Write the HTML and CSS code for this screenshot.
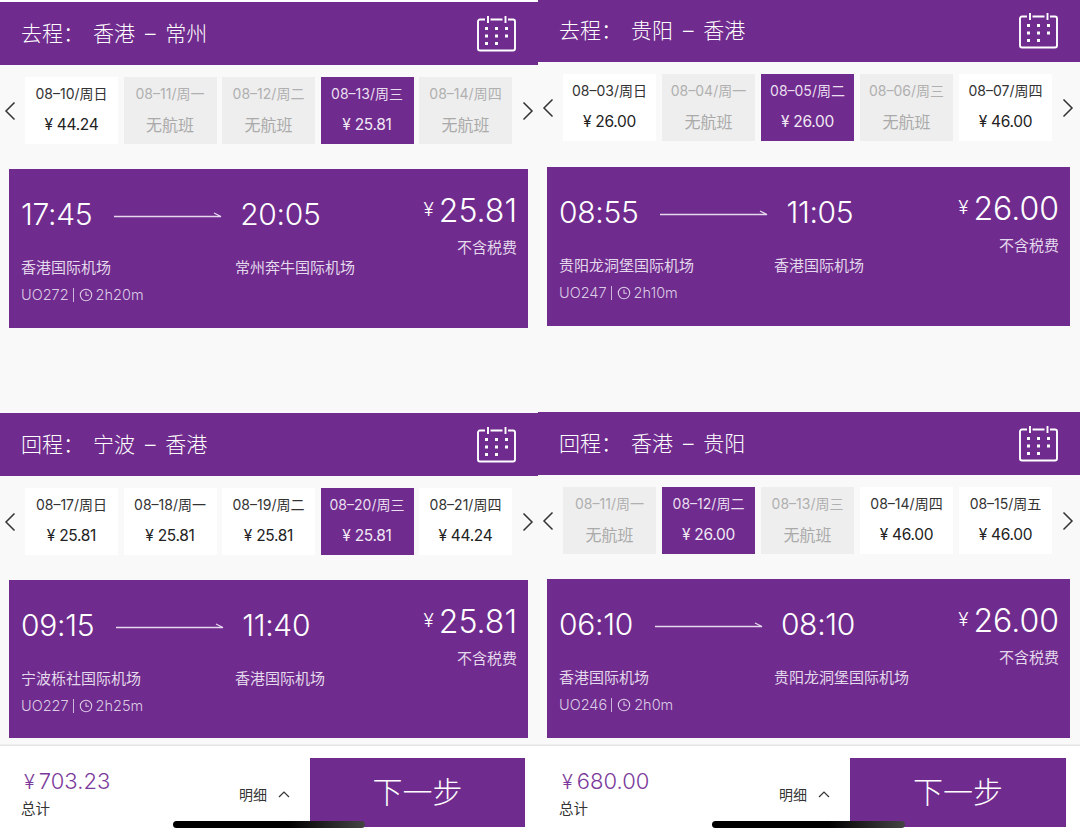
FILE: index.html
```html
<!DOCTYPE html>
<html>
  <head>
    <title>航班选择</title>
    <meta name="viewport" content="width=device-width, initial-scale=1">
    <link rel="stylesheet" href="styles.css">
  </head>
  <body>
    <svg class="defs" width="0" height="0">
      <symbol id="cal" viewBox="0 0 40 37">
        <path d="M8 4.500H3A2 2 0 0 0 1 6.500v27A2 2 0 0 0 3 35.500h33a2 2 0 0 0 2-2v-27a2 2 0 0 0-2-2H31M13.500 4.500h12M11 1v7M28.500 1v7" fill="none" stroke="#fff" stroke-width="1.900"/>
        <g fill="#fff">
          <rect x="8" y="12" width="3" height="3"/><rect x="18" y="12" width="3" height="3"/><rect x="28" y="12" width="3" height="3"/>
          <rect x="8" y="19.500" width="3" height="3"/><rect x="18" y="19.500" width="3" height="3"/><rect x="28" y="19.500" width="3" height="3"/>
          <rect x="8" y="27" width="3" height="3"/><rect x="18" y="27" width="3" height="3"/>
        </g>
      </symbol>
      <symbol id="prev" viewBox="0 0 12 20"><path d="M10.500 1.500 2 10l8.500 8.500" fill="none" stroke="#333" stroke-width="1.500"/></symbol>
      <symbol id="next" viewBox="0 0 12 20"><path d="M1.500 1.500 10 10l-8.500 8.500" fill="none" stroke="#333" stroke-width="1.500"/></symbol>
      <symbol id="arrow" viewBox="0 0 108 8"><path d="M0 5.500H107L100 2" fill="none" stroke="#e6d8ee" stroke-width="1.300"/></symbol>
      <symbol id="clock" viewBox="0 0 14 14"><circle cx="7" cy="7" r="5.700" fill="none" stroke="#dccbe6" stroke-width="1.100"/><path d="M7 3.600V7.300H10" fill="none" stroke="#dccbe6" stroke-width="1.100"/></symbol>
    </svg>

    <div class="page">
      <div class="col col-left">
        <section class="panel panel-top">
          <header class="head"><span class="head-label">去程：</span><span class="head-route">香港 – 常州</span><svg class="cal"><use href="#cal"/></svg></header>
          <div class="dates">
            <svg class="chev"><use href="#prev"/></svg>
            <div class="day"><p>08–10/周日</p><b>¥ 44.24</b></div>
            <div class="day off"><p>08–11/周一</p><b>无航班</b></div>
            <div class="day off"><p>08–12/周二</p><b>无航班</b></div>
            <div class="day on"><p>08–13/周三</p><b>¥ 25.81</b></div>
            <div class="day off"><p>08–14/周四</p><b>无航班</b></div>
            <svg class="chev"><use href="#next"/></svg>
          </div>
          <div class="flight">
            <div class="info">
              <div class="times"><span class="time">17:45</span><svg class="arrow"><use href="#arrow"/></svg><span class="time">20:05</span></div>
              <div class="ports"><span>香港国际机场</span><span>常州奔牛国际机场</span></div>
              <div class="meta">UO272<i class="bar"></i><svg class="clock"><use href="#clock"/></svg>2h20m</div>
            </div>
            <div class="price"><div class="amount"><small>¥</small>25.81</div><div class="tax">不含税费</div></div>
          </div>
        </section>
        <section class="panel panel-bottom">
          <header class="head"><span class="head-label">回程：</span><span class="head-route">宁波 – 香港</span><svg class="cal"><use href="#cal"/></svg></header>
          <div class="dates">
            <svg class="chev"><use href="#prev"/></svg>
            <div class="day"><p>08–17/周日</p><b>¥ 25.81</b></div>
            <div class="day"><p>08–18/周一</p><b>¥ 25.81</b></div>
            <div class="day"><p>08–19/周二</p><b>¥ 25.81</b></div>
            <div class="day on"><p>08–20/周三</p><b>¥ 25.81</b></div>
            <div class="day"><p>08–21/周四</p><b>¥ 44.24</b></div>
            <svg class="chev"><use href="#next"/></svg>
          </div>
          <div class="flight">
            <div class="info">
              <div class="times"><span class="time">09:15</span><svg class="arrow"><use href="#arrow"/></svg><span class="time">11:40</span></div>
              <div class="ports"><span>宁波栎社国际机场</span><span>香港国际机场</span></div>
              <div class="meta">UO227<i class="bar"></i><svg class="clock"><use href="#clock"/></svg>2h25m</div>
            </div>
            <div class="price"><div class="amount"><small>¥</small>25.81</div><div class="tax">不含税费</div></div>
          </div>
        </section>
        <footer class="foot">
          <div class="total"><div class="total-num"><small>¥</small>703.23</div><div class="total-label">总计</div></div>
          <div class="detail">明细<svg class="up" viewBox="0 0 12 8"><path d="M1 7l5-5 5 5" fill="none" stroke="#333" stroke-width="1.200"/></svg></div>
          <div class="next-btn">下一步</div>
          <div class="home-bar"></div>
        </footer>
      </div>

      <div class="col col-right">
        <section class="panel panel-top">
          <header class="head"><span class="head-label">去程：</span><span class="head-route">贵阳 – 香港</span><svg class="cal"><use href="#cal"/></svg></header>
          <div class="dates">
            <svg class="chev"><use href="#prev"/></svg>
            <div class="day"><p>08–03/周日</p><b>¥ 26.00</b></div>
            <div class="day off"><p>08–04/周一</p><b>无航班</b></div>
            <div class="day on"><p>08–05/周二</p><b>¥ 26.00</b></div>
            <div class="day off"><p>08–06/周三</p><b>无航班</b></div>
            <div class="day"><p>08–07/周四</p><b>¥ 46.00</b></div>
            <svg class="chev"><use href="#next"/></svg>
          </div>
          <div class="flight">
            <div class="info">
              <div class="times"><span class="time">08:55</span><svg class="arrow"><use href="#arrow"/></svg><span class="time">11:05</span></div>
              <div class="ports"><span>贵阳龙洞堡国际机场</span><span>香港国际机场</span></div>
              <div class="meta">UO247<i class="bar"></i><svg class="clock"><use href="#clock"/></svg>2h10m</div>
            </div>
            <div class="price"><div class="amount"><small>¥</small>26.00</div><div class="tax">不含税费</div></div>
          </div>
        </section>
        <section class="panel panel-bottom">
          <header class="head"><span class="head-label">回程：</span><span class="head-route">香港 – 贵阳</span><svg class="cal"><use href="#cal"/></svg></header>
          <div class="dates">
            <svg class="chev"><use href="#prev"/></svg>
            <div class="day off"><p>08–11/周一</p><b>无航班</b></div>
            <div class="day on"><p>08–12/周二</p><b>¥ 26.00</b></div>
            <div class="day off"><p>08–13/周三</p><b>无航班</b></div>
            <div class="day"><p>08–14/周四</p><b>¥ 46.00</b></div>
            <div class="day"><p>08–15/周五</p><b>¥ 46.00</b></div>
            <svg class="chev"><use href="#next"/></svg>
          </div>
          <div class="flight">
            <div class="info">
              <div class="times"><span class="time">06:10</span><svg class="arrow"><use href="#arrow"/></svg><span class="time">08:10</span></div>
              <div class="ports"><span>香港国际机场</span><span>贵阳龙洞堡国际机场</span></div>
              <div class="meta">UO246<i class="bar"></i><svg class="clock"><use href="#clock"/></svg>2h0m</div>
            </div>
            <div class="price"><div class="amount"><small>¥</small>26.00</div><div class="tax">不含税费</div></div>
          </div>
        </section>
        <footer class="foot">
          <div class="total"><div class="total-num"><small>¥</small>680.00</div><div class="total-label">总计</div></div>
          <div class="detail">明细<svg class="up" viewBox="0 0 12 8"><path d="M1 7l5-5 5 5" fill="none" stroke="#333" stroke-width="1.200"/></svg></div>
          <div class="next-btn">下一步</div>
          <div class="home-bar"></div>
        </footer>
      </div>
    </div>
  </body>
</html>
```

FILE: styles.css
```css
body {
    margin: 0;
    background: #fff;
    font-family: Inter, "Noto Sans CJK SC", sans-serif;
    color: #333;
}

p {
    margin: 0;
}

.defs {
    display: block;
    height: 0;
}

.page {
    display: grid;
    grid-template-columns: 538px 542px;
    height: 839px;
    overflow: hidden;
}

.col {
    display: flex;
    flex-direction: column;
    height: 839px;
    background: #f9f9f9;
    box-sizing: border-box;
}

.col-left {
    padding-top: 2px;
    background: linear-gradient(#fff 2px, #f9f9f9 2px);
}

.panel-top {
    height: 411px;
}

.col-right .panel-top {
    height: 412px;
}

.panel-bottom {
    height: 332px;
}

.col-right .panel-bottom {
    height: 333px;
}

.head {
    height: 63px;
    background: #6f2b8d;
    color: #fff;
    display: flex;
    align-items: center;
    padding: 0 21px 3px;
    font-size: 21px;
    font-weight: 300;
    word-spacing: 4px;
    box-sizing: border-box;
}

.col-right .panel-top .head {
    height: 62px;
    padding-bottom: 5px;
}

.head-label {
    width: 72px;
}

.head-route {
    flex: 1;
}

.cal {
    width: 40px;
    height: 37px;
    flex: none;
    margin-top: 3px;
}

.dates {
    display: flex;
    align-items: center;
    gap: 6px;
    height: 67px;
    margin-top: 12px;
    padding-left: 4px;
}

.col-left .dates {
    gap: 5.500px;
}

.chev {
    width: 12px;
    height: 20px;
    flex: none;
}

.chev:first-child {
    margin-right: 3px;
}

.col-left .chev:first-child {
    margin-right: 3.500px;
}

.chev:last-child {
    margin-left: 4px;
}

.day {
    width: 93px;
    height: 67px;
    background: #fff;
    text-align: center;
    box-sizing: border-box;
    padding-top: 8px;
    font-size: 14px;
    color: #333;
}

.day p {
    line-height: 18px;
}

.day b {
    display: block;
    margin-top: 13px;
    font-weight: 400;
    font-size: 15.500px;
    letter-spacing: -0.300px;
    line-height: 18px;
    color: #222;
}

.day.off {
    background: #eee;
    color: #b0b0b0;
}

.day.off b {
    color: #aaa;
    font-size: 16px;
    letter-spacing: 0;
}

.day.on {
    background: #6f2b8d;
    color: #eadff0;
}

.day.on b {
    color: #f1e9f5;
}

.flight {
    display: flex;
    justify-content: space-between;
    height: 159px;
    margin: 25px 10px 0 9px;
    padding: 0 11px 0 12px;
    background: #6f2b8d;
    color: #fff;
    box-sizing: border-box;
}

.col-right .panel-top .flight {
    margin-top: 26px;
}

.col-left .panel-bottom .flight {
    height: 158px;
}

.times {
    display: flex;
    align-items: center;
    margin-top: 26px;
    height: 38px;
}

.time {
    font-size: 30px;
    font-weight: 300;
    letter-spacing: -0.300px;
}

.arrow {
    width: 108px;
    height: 8px;
    margin: 2px 18px 0 22px;
}

.ports {
    display: grid;
    grid-template-columns: 214px auto;
    margin-top: 24px;
    font-size: 15px;
    line-height: 22px;
    color: #e4d8ec;
}

.col-right .ports {
    grid-template-columns: 215px auto;
}

.meta {
    display: flex;
    align-items: center;
    margin-top: 7px;
    font-size: 14.500px;
    font-weight: 300;
    color: #dccbe6;
}

.bar {
    width: 1px;
    height: 14px;
    background: #cdb6da;
    margin: 0 5px 0 4px;
}

.clock {
    width: 14px;
    height: 14px;
    margin-right: 3px;
}

.price {
    text-align: right;
    padding-top: 21px;
}

.amount {
    font-size: 32px;
    font-weight: 300;
    line-height: 40px;
}

.amount small {
    font-size: 19px;
    margin-right: 5px;
    vertical-align: 6px;
}

.tax {
    margin-top: 5px;
    font-size: 15px;
    color: #e4d8ec;
}

.foot {
    position: relative;
    flex: 1;
    background: #fff;
    border-top: 1px solid #e4e4e4;
    box-shadow: 0 -1px 0 #eee;
    display: flex;
    align-items: flex-start;
}

.total {
    width: 219px;
    padding: 23px 0 0 21px;
    box-sizing: border-box;
}

.col-right .total {
    width: 221px;
}

.total-num {
    font-size: 22px;
    font-weight: 300;
    color: #7b3a9b;
    line-height: 24px;
    padding-left: 3px;
}

.total-num small {
    font-size: 20px;
    margin-right: 4px;
}

.total-label {
    margin-top: 3px;
    font-size: 14.500px;
    color: #333;
}

.detail {
    display: flex;
    align-items: center;
    gap: 11px;
    width: 91px;
    margin-top: 38px;
    padding-left: 20px;
    box-sizing: border-box;
    font-size: 14px;
    color: #333;
}

.up {
    width: 12px;
    height: 8px;
}

.next-btn {
    width: 215px;
    height: 69px;
    margin-top: 12px;
    background: #6f2b8d;
    color: #fff;
    font-size: 30px;
    font-weight: 300;
    text-align: center;
    line-height: 68px;
}

.col-right .next-btn {
    width: 216px;
}

/* phone home indicator, sits over the button */
.home-bar {
    position: absolute;
    left: 173px;
    bottom: 11px;
    width: 192px;
    height: 7px;
    border-radius: 4px;
    background: linear-gradient(to right, #000 60%, #444);
}

.col-right .home-bar {
    left: 174px;
    width: 193px;
}
```
